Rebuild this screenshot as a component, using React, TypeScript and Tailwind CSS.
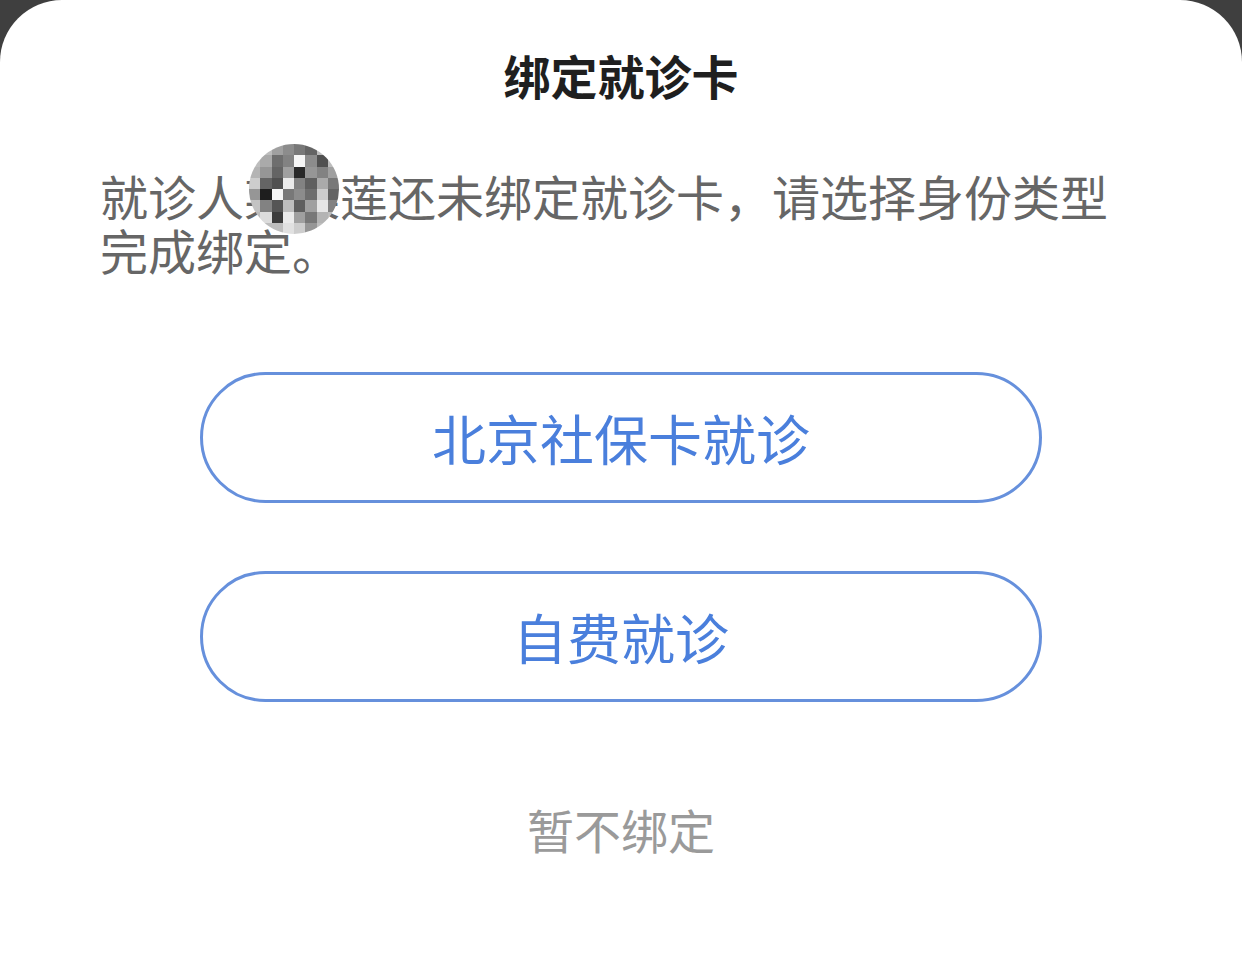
const mosaic = [
  [0, 0, 160, 140, 120, 100, 0, 0],
  [0, 170, 110, 130, 245, 140, 80, 0],
  [180, 150, 100, 160, 40, 150, 130, 160],
  [205, 100, 80, 235, 130, 95, 170, 120],
  [150, 30, 245, 120, 140, 110, 205, 100],
  [195, 130, 85, 190, 95, 160, 230, 130],
  [0, 220, 60, 235, 160, 120, 180, 0],
  [0, 0, 190, 225, 205, 150, 0, 0],
]

function Mosaic() {
  return (
    <div className="absolute left-[249px] top-[-24px] w-[90px] h-[90px] rounded-full overflow-hidden grid grid-cols-8">
      {mosaic.flat().map((v, i) => (
        <div
          key={i}
          style={{ backgroundColor: v === 0 ? '#bdbdbd' : `rgb(${v},${v},${v})` }}
        />
      ))}
    </div>
  )
}

export default function App() {
  return (
    <div
      className="w-[1242px] h-[979px] bg-[#3f3f3f] overflow-hidden"
      style={{ fontFamily: '"Noto Sans CJK SC", "Noto Sans", sans-serif' }}
    >
      <div className="h-full bg-white rounded-t-[62px] flex flex-col items-center pt-[48px]">
        <h1 className="text-[47px] leading-[54px] font-bold text-[#1f1f1f]">绑定就诊卡</h1>

        <div className="relative self-stretch px-[100px] mt-[66px] text-[48px] leading-[54px] text-[#666666]">
          <p>就诊人某某莲还未绑定就诊卡，请选择身份类型完成绑定。</p>
          <Mosaic />
        </div>

        <div className="self-stretch px-[200px] mt-[96px] flex flex-col gap-[68px]">
          <button className="h-[131px] w-full rounded-full border-[3px] border-[#6690dc] text-[54px] text-[#4a7fdc]">
            北京社保卡就诊
          </button>
          <button className="h-[131px] w-full rounded-full border-[3px] border-[#6690dc] text-[54px] text-[#4a7fdc]">
            自费就诊
          </button>
        </div>

        <button className="mt-[100px] text-[47px] leading-[54px] text-[#9a9a9a]">暂不绑定</button>
      </div>
    </div>
  )
}
